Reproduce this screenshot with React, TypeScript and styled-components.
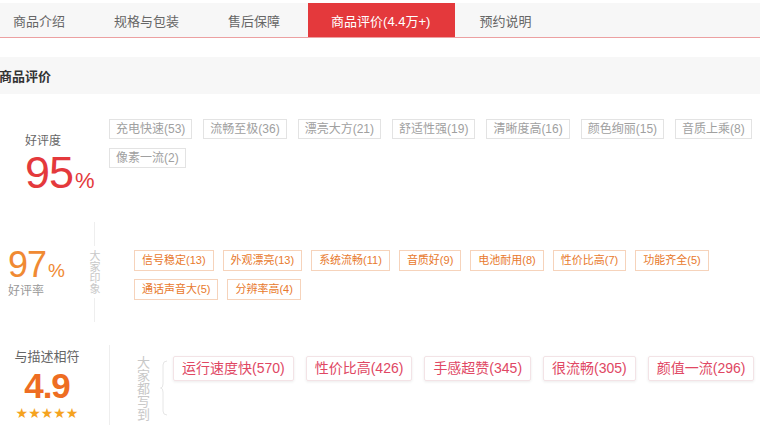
import React from 'react';
import styled, { createGlobalStyle } from 'styled-components';

const GlobalStyle = createGlobalStyle`
  html, body {
    margin: 0;
    padding: 0;
    background: #fff;
    overflow: hidden;
  }
  body {
    font-family: "Liberation Sans", "Noto Sans CJK SC", sans-serif;
    color: #666;
  }
`;

const Page = styled.div`
  width: 760px;
  height: 432px;
  display: flex;
  flex-direction: column;
  overflow: hidden;
`;

const TabBar = styled.div`
  margin-top: 3px;
  margin-left: -11px;
  height: 34px;
  display: flex;
  background: #f7f7f7;
  border-bottom: 1px solid #eca0a1;
`;

const Tab = styled.div<{ $active?: boolean }>`
  display: flex;
  align-items: center;
  font-size: 13px;
  color: ${(p) => (p.$active ? '#fff' : '#666')};
  background: ${(p) => (p.$active ? '#e4393c' : 'transparent')};
  padding: ${(p) => (p.$active ? '0 25px 0 23px' : '0 25px 0 24px')};
  margin-left: ${(p) => (p.$active ? '3px' : '0')};
`;

const Header = styled.div`
  margin-top: 19px;
  height: 37px;
  background: #f7f7f7;
  display: flex;
  align-items: center;
  font-size: 13px;
  font-weight: bold;
  color: #333;
  margin-left: -1px;
`;

const Section = styled.div<{ $h: number; $top?: number; $align?: string }>`
  height: ${(p) => p.$h}px;
  margin-top: ${(p) => p.$top ?? 0}px;
  display: flex;
  align-items: ${(p) => p.$align ?? 'center'};
`;

/* ---- section 1 ---- */
const Rate1 = styled.div`
  width: 84px;
  padding-left: 25px;
  align-self: stretch;
  padding-top: 40px;
  box-sizing: content-box;
`;

const RateLabel = styled.div<{ $color?: string; $size?: number }>`
  font-size: ${(p) => p.$size ?? 12}px;
  line-height: 14px;
  color: ${(p) => p.$color ?? '#666'};
`;

const BigNum = styled.div<{ $color: string; $size: number; $bold?: boolean }>`
  font-family: "Liberation Sans", Arial, sans-serif;
  color: ${(p) => p.$color};
  font-size: ${(p) => p.$size}px;
  font-weight: ${(p) => (p.$bold ? 'bold' : 'normal')};
  line-height: 1;
  letter-spacing: -1px;
`;

const Pct = styled.span<{ $size: number }>`
  font-size: ${(p) => p.$size}px;
  letter-spacing: 0;
  margin-left: 2px;
`;

const TagWrap = styled.div<{ $gap: number; $rowGap: number }>`
  flex: 1;
  display: flex;
  flex-wrap: wrap;
  column-gap: ${(p) => p.$gap}px;
  row-gap: ${(p) => p.$rowGap}px;
  align-content: flex-start;
`;

const GrayTag = styled.span`
  height: 20px;
  box-sizing: border-box;
  padding: 0 6px;
  border: 1px solid #e3e3e3;
  color: #a0a0a0;
  font-size: 12px;
  line-height: 18px;
  white-space: nowrap;
`;

/* ---- section 2 ---- */
const Rate2 = styled.div`
  width: 86px;
  padding-left: 8px;
`;

const Divider = styled.div`
  align-self: stretch;
  width: 1px;
  background: #eee;
  display: flex;
  align-items: center;
  justify-content: center;
`;

const VertLabel = styled.div<{ $size: number }>`
  writing-mode: vertical-rl;
  font-size: ${(p) => p.$size}px;
  line-height: ${(p) => p.$size}px;
  color: #c8c8c8;
  background: #fff;
  padding: 4px 0;
  white-space: nowrap;
  font-family: "Noto Sans CJK SC", sans-serif;
`;

const OrangeTag = styled.span`
  height: 21px;
  box-sizing: border-box;
  padding: 0 7px;
  border: 1px solid #f6d3bb;
  color: #e8792c;
  font-size: 11px;
  line-height: 19px;
  white-space: nowrap;
`;

/* ---- section 3 ---- */
const Rate3 = styled.div`
  width: 109px;
  display: flex;
  flex-direction: column;
  align-items: center;
  padding-right: 15px;
  box-sizing: border-box;
`;

const Stars = styled.div`
  margin-top: 4px;
  color: #f5a31f;
  font-size: 14px;
  line-height: 12px;
  letter-spacing: 0;
  font-family: "DejaVu Sans", sans-serif;
`;

const Label3 = styled.div`
  margin-left: 27px;
  align-self: center;
  padding-top: 6px;
`;

const Bracket = styled.svg`
  margin-left: 10px;
  margin-top: 15px;
  flex-shrink: 0;
`;

const PinkTag = styled.span`
  height: 25px;
  box-sizing: border-box;
  padding: 0 8px;
  border: 1px solid #f3e3e6;
  border-radius: 2px;
  box-shadow: 0 1px 3px rgba(0, 0, 0, 0.08);
  color: #e04763;
  font-size: 14px;
  line-height: 23px;
  white-space: nowrap;
`;

const tabs = ['商品介绍', '规格与包装', '售后保障', '商品评价(4.4万+)', '预约说明'];
const tags1 = ['充电快速(53)', '流畅至极(36)', '漂亮大方(21)', '舒适性强(19)', '清晰度高(16)', '颜色绚丽(15)', '音质上乘(8)', '像素一流(2)'];
const tags2 = ['信号稳定(13)', '外观漂亮(13)', '系统流畅(11)', '音质好(9)', '电池耐用(8)', '性价比高(7)', '功能齐全(5)', '通话声音大(5)', '分辨率高(4)'];
const tags3 = ['运行速度快(570)', '性价比高(426)', '手感超赞(345)', '很流畅(305)', '颜值一流(296)'];

export default function App() {
  return (
    <Page>
      <GlobalStyle />
      <TabBar>
        {tabs.map((t, i) => (
          <Tab key={t} $active={i === 3}>{t}</Tab>
        ))}
      </TabBar>
      <Header>商品评价</Header>

      <Section $h={128} $align="flex-start">
        <Rate1>
          <RateLabel>好评度</RateLabel>
          <BigNum $color="#e4393c" $size={45} style={{ marginTop: 2 }}>
            95<Pct $size={22}>%</Pct>
          </BigNum>
        </Rate1>
        <TagWrap $gap={11} $rowGap={9} style={{ paddingTop: 25 }}>
          {tags1.map((t) => (
            <GrayTag key={t}>{t}</GrayTag>
          ))}
        </TagWrap>
      </Section>

      <Section $h={100}>
        <Rate2>
          <BigNum $color="#f08a33" $size={36}>
            97<Pct $size={19}>%</Pct>
          </BigNum>
          <RateLabel $color="#999" style={{ marginTop: 1 }}>好评率</RateLabel>
        </Rate2>
        <Divider>
          <VertLabel $size={11}>大家印象</VertLabel>
        </Divider>
        <TagWrap $gap={9} $rowGap={8} style={{ paddingLeft: 39, paddingTop: 6 }}>
          {tags2.map((t) => (
            <OrangeTag key={t}>{t}</OrangeTag>
          ))}
        </TagWrap>
      </Section>

      <Section $h={80} $top={23} $align="flex-start">
        <Rate3>
          <RateLabel $size={13} style={{ marginTop: 5 }}>与描述相符</RateLabel>
          <BigNum $color="#ee6d22" $size={35} $bold style={{ marginTop: 4 }}>4.9</BigNum>
          <Stars>★★★★★</Stars>
        </Rate3>
        <Divider />
        <Label3>
          <VertLabel $size={13}>大家都写到</VertLabel>
        </Label3>
        <Bracket width="8" height="56" viewBox="0 0 8 56">
          <path
            d="M7 1 Q3 1 3 5 L3 24 Q3 28 0.5 28 Q3 28 3 32 L3 51 Q3 55 7 55"
            fill="none"
            stroke="#e6e6e6"
            strokeWidth="1"
          />
        </Bracket>
        <TagWrap $gap={12} $rowGap={8} style={{ paddingLeft: 5, paddingTop: 11 }}>
          {tags3.map((t) => (
            <PinkTag key={t}>{t}</PinkTag>
          ))}
        </TagWrap>
      </Section>
    </Page>
  );
}
